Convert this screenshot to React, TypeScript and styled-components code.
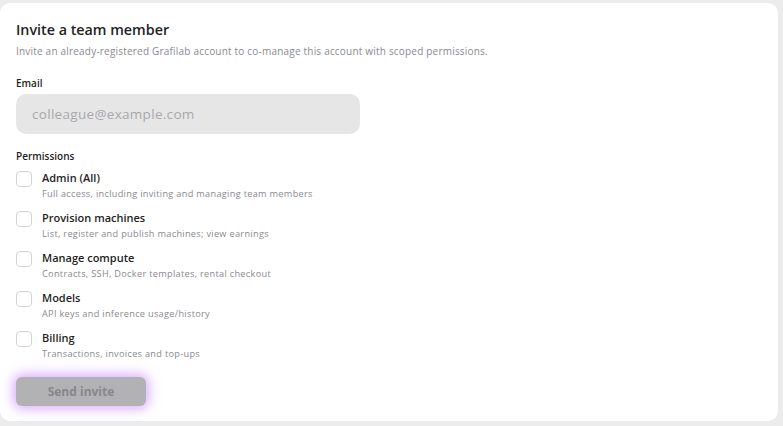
import React from "react";
import styled, { createGlobalStyle } from "styled-components";

const Global = createGlobalStyle`
  html, body { margin: 0; padding: 0; background: #ececec; }
  body { font-family: "Open Sans", "DejaVu Sans", sans-serif; }
  * { box-sizing: border-box; }
`;

const Page = styled.div`
  width: 783px;
  height: 426px;
  padding: 3px 5px 5px 0;
  background: #ececec;
`;

const Card = styled.div`
  height: 100%;
  background: #ffffff;
  border-radius: 10px;
  padding: 17px 16px 0 16px;
  display: flex;
  flex-direction: column;
`;

const Title = styled.h2`
  margin: 0;
  font-size: 14.3px;
  font-weight: 600;
  color: #1f1f24;
  line-height: 20px;
`;

const Subtitle = styled.p`
  margin: 4px 0 0;
  font-size: 10px;
  letter-spacing: 0.2px;
  color: #8a8a8f;
  line-height: 14px;
`;

const Label = styled.div<{ $mt: number }>`
  margin-top: ${(p) => p.$mt}px;
  font-size: 10px;
  font-weight: 600;
  color: #1f1f24;
  line-height: 14px;
`;

const Input = styled.input`
  margin-top: 4px;
  width: 344px;
  height: 40px;
  border: none;
  outline: none;
  border-radius: 10px;
  background: #e6e6e6;
  padding: 0 16px;
  font-family: inherit;
  font-size: 13.5px;
  letter-spacing: 0.3px;
  color: #333;
  &::placeholder { color: #a8a8ad; }
`;

const List = styled.div`
  margin-top: 7px;
  display: flex;
  flex-direction: column;
  gap: 10px;
`;

const Row = styled.label`
  display: flex;
  align-items: flex-start;
  gap: 10px;
  height: 30px;
`;

const Box = styled.span`
  width: 16px;
  height: 16px;
  border: 1px solid #d4d4d8;
  border-radius: 4px;
  background: #fff;
  flex: none;
  margin-top: 1px;
`;

const Texts = styled.div`
  display: flex;
  flex-direction: column;
  gap: 2px;
`;

const RowTitle = styled.span`
  font-size: 11px;
  font-weight: 600;
  color: #1f1f24;
  line-height: 15px;
`;

const RowDesc = styled.span`
  font-size: 9.2px;
  letter-spacing: 0.3px;
  color: #8a8a8f;
  line-height: 13px;
`;

const Button = styled.button`
  margin-top: 17px;
  width: 130px;
  height: 29px;
  border: none;
  border-radius: 6px;
  background: #b2b2b4;
  color: #87878a;
  font-family: inherit;
  font-size: 12px;
  font-weight: 700;
  box-shadow: 0 0 12px 3px rgba(196, 120, 255, 0.6);
  cursor: not-allowed;
`;

const perms = [
  ["Admin (All)", "Full access, including inviting and managing team members"],
  ["Provision machines", "List, register and publish machines; view earnings"],
  ["Manage compute", "Contracts, SSH, Docker templates, rental checkout"],
  ["Models", "API keys and inference usage/history"],
  ["Billing", "Transactions, invoices and top-ups"],
];

export default function App() {
  return (
    <Page>
      <Global />
      <Card>
        <Title>Invite a team member</Title>
        <Subtitle>
          Invite an already-registered Grafilab account to co-manage this account with scoped permissions.
        </Subtitle>
        <Label $mt={18}>Email</Label>
        <Input placeholder="colleague@example.com" />
        <Label $mt={15}>Permissions</Label>
        <List>
          {perms.map(([t, d]) => (
            <Row key={t}>
              <Box />
              <Texts>
                <RowTitle>{t}</RowTitle>
                <RowDesc>{d}</RowDesc>
              </Texts>
            </Row>
          ))}
        </List>
        <Button disabled>Send invite</Button>
      </Card>
    </Page>
  );
}
